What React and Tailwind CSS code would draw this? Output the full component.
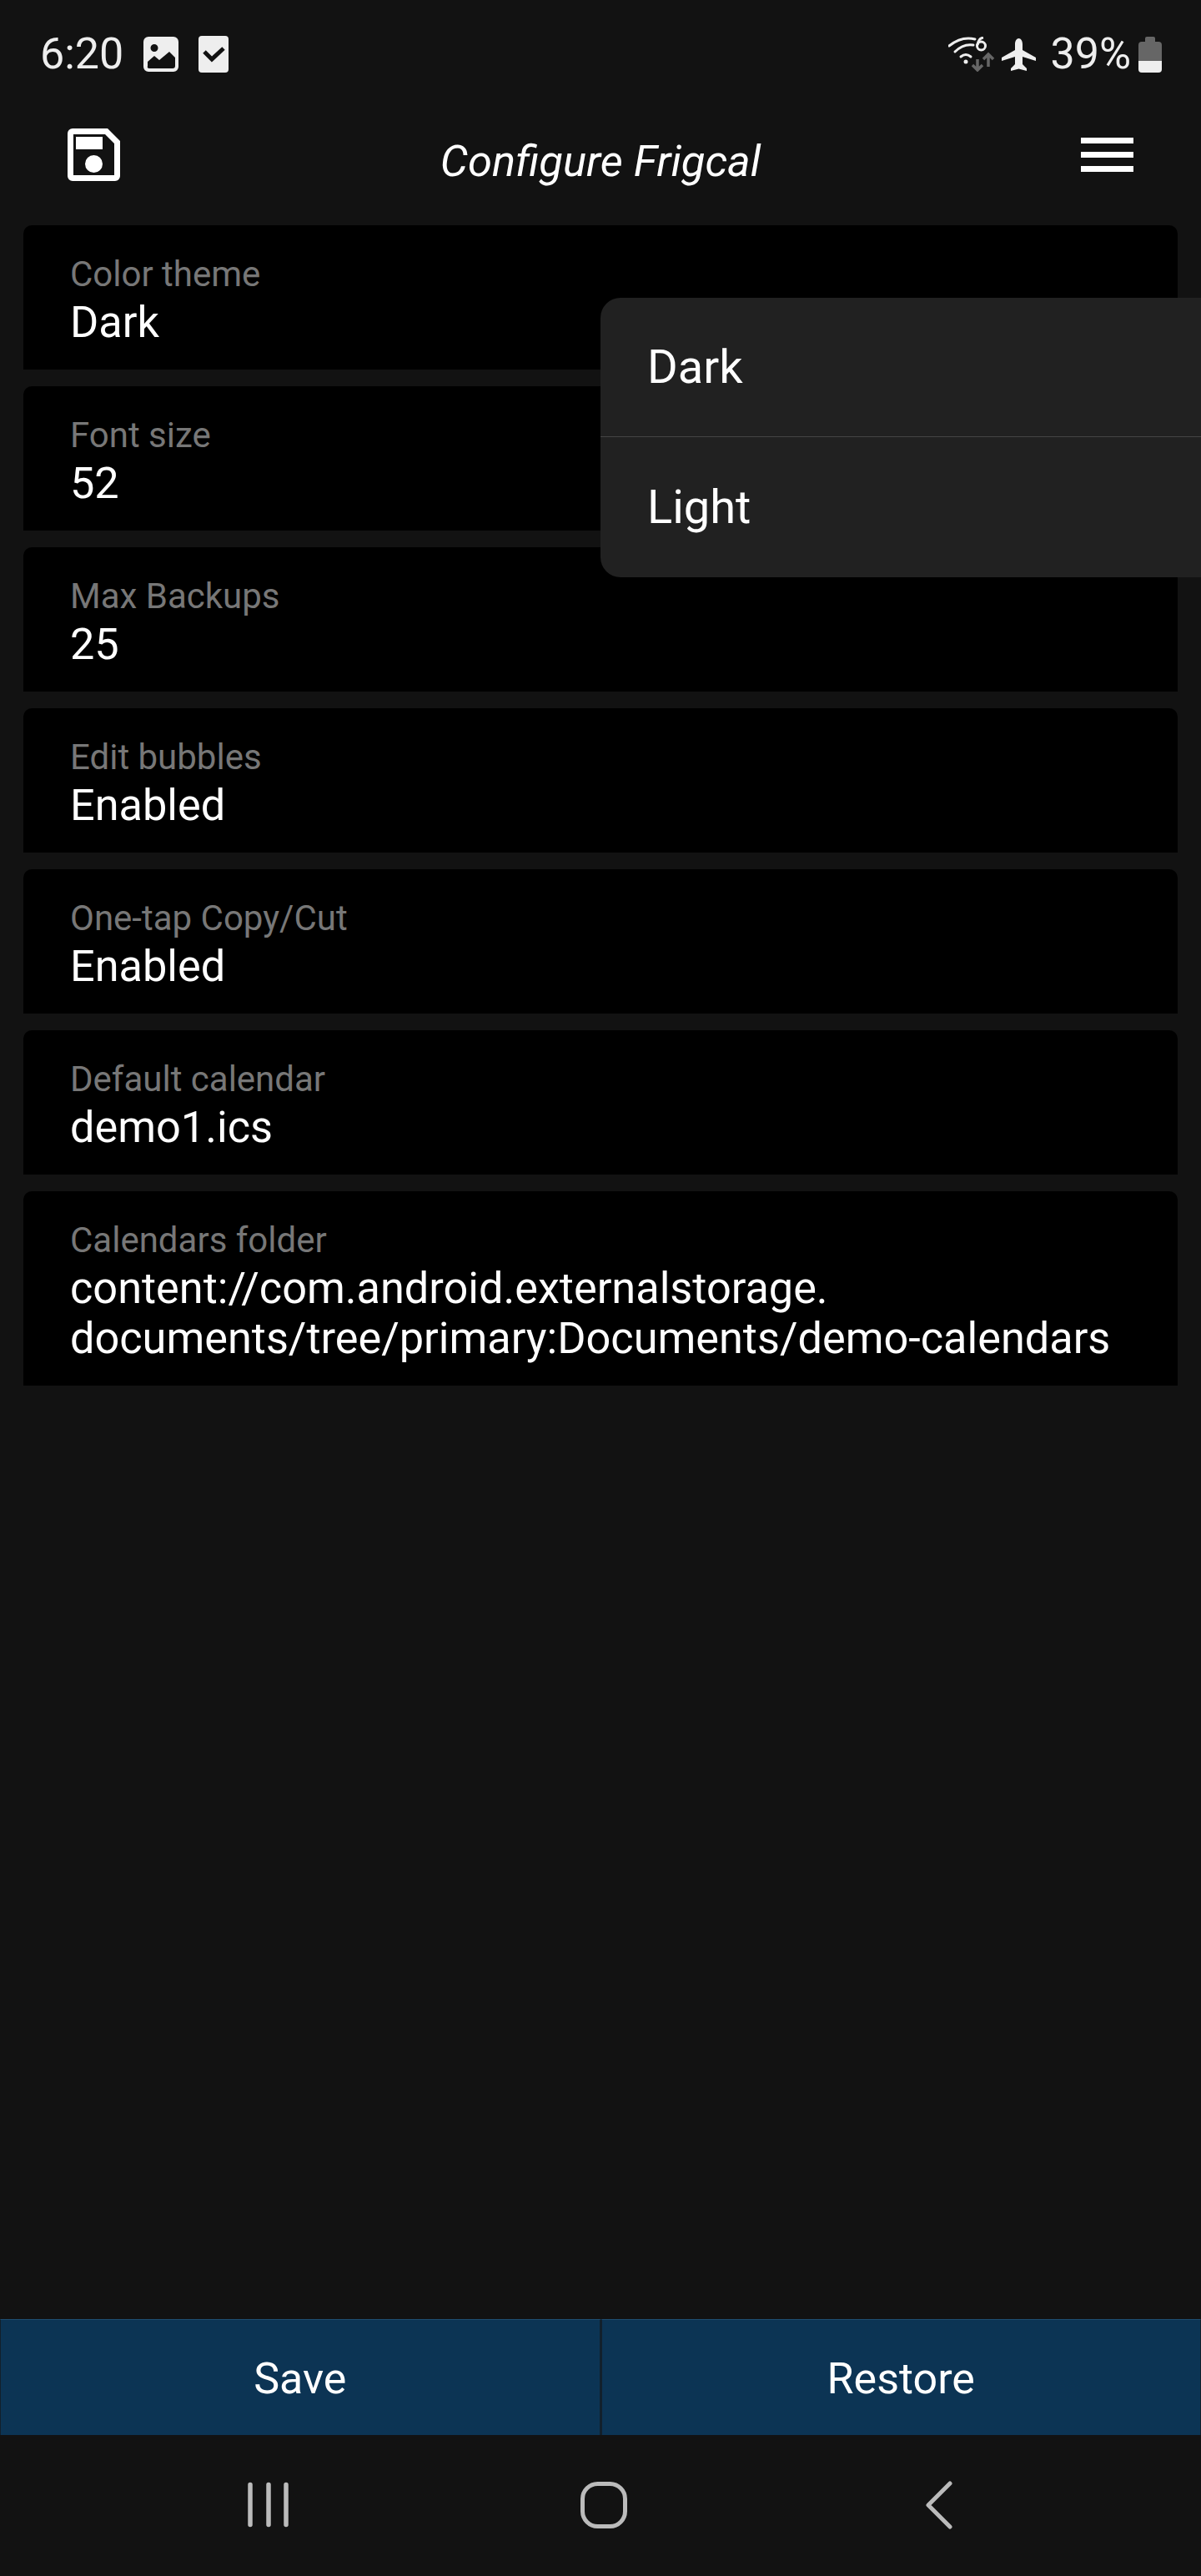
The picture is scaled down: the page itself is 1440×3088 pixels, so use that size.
const settings = [
  { label: "Color theme", value: "Dark" },
  { label: "Font size", value: "52" },
  { label: "Max Backups", value: "25" },
  { label: "Edit bubbles", value: "Enabled" },
  { label: "One-tap Copy/Cut", value: "Enabled" },
  { label: "Default calendar", value: "demo1.ics" },
  {
    label: "Calendars folder",
    value: "content://com.android.externalstorage.\ndocuments/tree/primary:Documents/demo-calendars",
  },
];

const ImageIcon = () => (
  <svg width="42" height="42" viewBox="0 0 42 42" className="shrink-0">
    <path
      fillRule="evenodd"
      fill="#eeeeee"
      d="M6 0H36A6 6 0 0 1 42 6V36A6 6 0 0 1 36 42H6A6 6 0 0 1 0 36V6A6 6 0 0 1 6 0ZM13 9A4.5 4.5 0 1 0 13 18A4.5 4.5 0 1 0 13 9ZM7 38H35Q38 38 38 35V25L31 18L19 28L13 23L5 30V35Q4 38 7 38Z"
    />
  </svg>
);

const CheckIcon = () => (
  <svg width="36" height="44" viewBox="0 0 36 44" className="shrink-0">
    <rect width="36" height="44" rx="4" fill="#eeeeee" />
    <path d="M7 19L16 28L30 15" fill="none" stroke="#121212" strokeWidth="5" />
  </svg>
);

const WifiIcon = () => (
  <svg width="56" height="42" viewBox="0 0 56 42" className="shrink-0">
    <g fill="none" stroke="#eeeeee" strokeWidth="3" strokeLinecap="round">
      <path d="M1 11Q16 -1 32 3" />
      <path d="M8 18Q18 8 30 10" />
      <path d="M15 24Q21 19 27 24" />
    </g>
    <circle cx="21" cy="30" r="2.5" fill="#eeeeee" />
    <circle cx="39.5" cy="11" r="5" fill="none" stroke="#eeeeee" strokeWidth="3" />
    <path d="M42 1Q36 2 35 10" fill="none" stroke="#eeeeee" strokeWidth="3" />
    <g fill="none" stroke="#666666" strokeWidth="3.5">
      <path d="M35 27V40M29 34L35 40L41 34" />
      <path d="M48 36V23M42 27L48 21L54 27" />
    </g>
  </svg>
);

const PlaneIcon = () => (
  <svg width="41" height="39" viewBox="0 0 41 39" className="shrink-0">
    <path
      fill="#eeeeee"
      d="M20.500 0C23 0 25 3 25 7V14L41 23V27L25 22V31L30 36V39L20.500 36.500L11 39V36L16 31V22L0 27V23L16 14V7C16 3 18 0 20.500 0Z"
    />
  </svg>
);

const BatteryIcon = () => (
  <svg width="28" height="43" viewBox="0 0 28 43" className="shrink-0">
    <path d="M8 6V2Q8 0 10 0H18Q20 0 20 2V6H24Q28 6 28 10V29H0V10Q0 6 4 6Z" fill="#666666" />
    <path d="M0 29H28V39Q28 43 24 43H4Q0 43 0 39Z" fill="#eeeeee" />
  </svg>
);

const SaveIcon = () => (
  <svg width="63" height="63" viewBox="0 0 63 63">
    <path
      fillRule="evenodd"
      fill="#ffffff"
      d="M6 0H48L63 15V57A6 6 0 0 1 57 63H6A6 6 0 0 1 0 57V6A6 6 0 0 1 6 0ZM7 7V56H56V18L45 7ZM10 10H42V25H10ZM31.500 32A10.500 10.500 0 1 1 31.500 53A10.500 10.500 0 1 1 31.500 32Z"
    />
  </svg>
);

const MenuIcon = () => (
  <svg width="63" height="41" viewBox="0 0 63 41">
    <path fill="#ffffff" d="M0 0H63V7H0ZM0 17H63V24H0ZM0 34H63V41H0Z" />
  </svg>
);

const RecentsIcon = () => (
  <svg width="52" height="55" viewBox="0 0 52 55">
    <path d="M4 3.500V51.500M26 3.500V51.500M47 3.500V51.500" stroke="#bbbbbb" strokeWidth="5.500" strokeLinecap="round" />
  </svg>
);

const HomeIcon = () => (
  <svg width="56" height="56" viewBox="0 0 56 56">
    <rect x="2.500" y="2.500" width="51" height="51" rx="18" fill="none" stroke="#bbbbbb" strokeWidth="5" />
  </svg>
);

const BackIcon = () => (
  <svg width="34" height="58" viewBox="0 0 34 58">
    <path d="M29 3L3 29L29 55" fill="none" stroke="#bbbbbb" strokeWidth="5" strokeLinecap="round" strokeLinejoin="round" />
  </svg>
);

const App = () => {
  return (
    <div className="relative flex flex-col w-[1440px] h-[3088px] overflow-hidden bg-[#121212] text-white font-['Roboto',sans-serif]">
      {/* Status bar */}
      <div className="flex items-center h-[130px] pl-[48px] pr-[47px] text-[#eeeeee]">
        <span className="text-[52px] leading-[60px] font-normal">6:20</span>
        <div className="ml-[24px]"><ImageIcon /></div>
        <div className="ml-[24px]"><CheckIcon /></div>
        <div className="flex-1" />
        <WifiIcon />
        <div className="ml-[8px]"><PlaneIcon /></div>
        <span className="ml-[17px] text-[52px] leading-[60px] font-normal">39%</span>
        <div className="ml-[9px]"><BatteryIcon /></div>
      </div>

      {/* Header */}
      <div className="flex items-center justify-between h-[140px] px-[81px] pb-[14px]">
        <div className="mb-[16px]"><SaveIcon /></div>
        <span className="italic text-[52.500px] leading-[60px]">Configure Frigcal</span>
        <div className="mb-[16px]"><MenuIcon /></div>
      </div>

      {/* Settings */}
      <div className="flex-1 flex flex-col gap-[20px] px-[28px]">
        {settings.map((item) => (
          <div key={item.label} className="bg-black rounded-t-[10px] pt-[35px] pb-[26px] px-[56px]">
            <div className="text-[42px] leading-[48px] text-[#777777]">{item.label}</div>
            <div className="mt-[4px] text-[52.250px] leading-[60px] whitespace-pre-line">{item.value}</div>
          </div>
        ))}
      </div>

      {/* Theme menu */}
      <div className="absolute left-[720px] top-[357px] w-[720px] rounded-l-[24px] bg-[#212121]">
        <div className="flex items-center h-[167px] px-[56px] text-[56px] border-b border-[#444444]">Dark</div>
        <div className="flex items-center h-[168px] px-[56px] text-[56px]">Light</div>
      </div>

      {/* Buttons */}
      <div className="flex h-[139px]">
        <div className="flex-1 flex items-center justify-center pt-[3px] bg-[#0c3454] border-t border-l border-r-2 border-[#12202c] border-t-[#1e4d70] text-[52px]">Save</div>
        <div className="flex-1 flex items-center justify-center pt-[3px] bg-[#0c3454] border-t border-x border-[#12202c] border-t-[#1e4d70] text-[52px]">Restore</div>
      </div>

      {/* Nav bar */}
      <div className="flex items-center h-[169px] pb-[2px] pl-[296px]">
        <RecentsIcon />
        <div className="ml-[348px]"><HomeIcon /></div>
        <div className="ml-[358px]"><BackIcon /></div>
      </div>
    </div>
  );
};

export default App;
